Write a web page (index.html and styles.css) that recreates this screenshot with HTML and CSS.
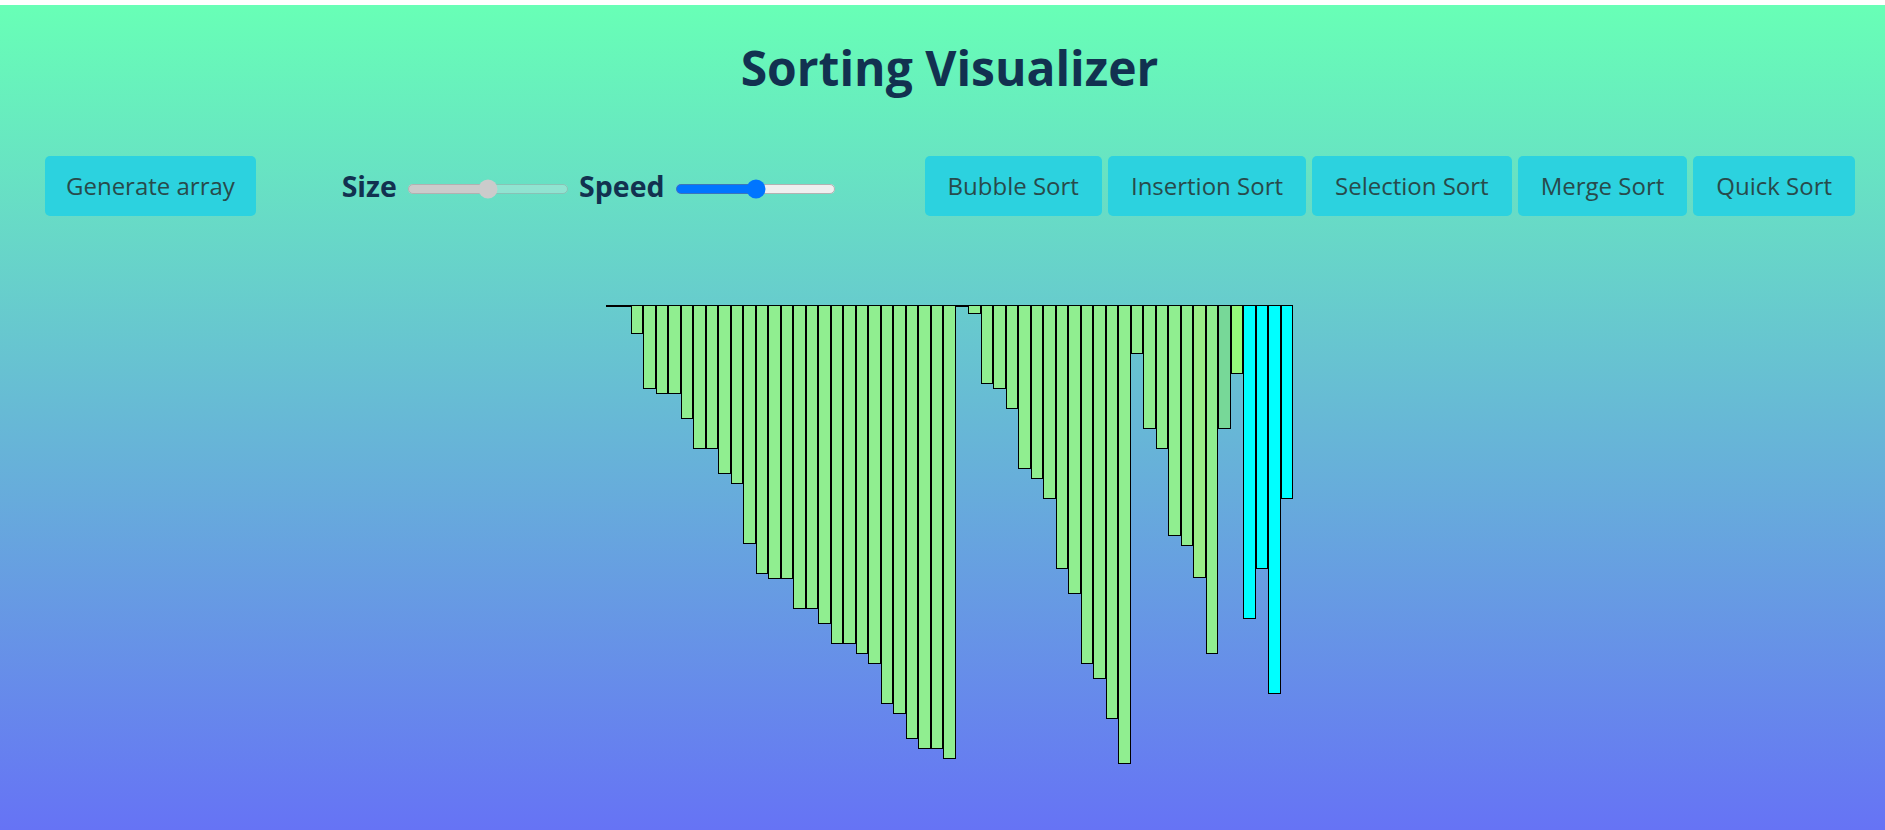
FILE: index.html
```html
<!DOCTYPE html>
<html lang="en">
<head>
<meta charset="utf-8">
<title>Sorting Visualizer</title>
<link rel="stylesheet" href="styles.css">
</head>
<body>
<div class="app">
  <h1 class="title">Sorting Visualizer</h1>
  <div class="toolbar">
    <button class="btn">Generate array</button>
    <div class="controls">
      <label class="ctl-label" for="size">Size</label>
      <input class="range" id="size" type="range" min="0" max="100" value="50" disabled>
      <label class="ctl-label" for="speed">Speed</label>
      <input class="range" id="speed" type="range" min="0" max="100" value="50">
    </div>
    <div class="sorts">
      <button class="btn">Bubble Sort</button>
      <button class="btn">Insertion Sort</button>
      <button class="btn">Selection Sort</button>
      <button class="btn">Merge Sort</button>
      <button class="btn">Quick Sort</button>
    </div>
  </div>
  <div class="chart">
    <div class="bar" style="height:2px"></div>
    <div class="bar" style="height:2px"></div>
    <div class="bar" style="height:29px"></div>
    <div class="bar" style="height:84px"></div>
    <div class="bar" style="height:89px"></div>
    <div class="bar" style="height:89px"></div>
    <div class="bar" style="height:114px"></div>
    <div class="bar" style="height:144px"></div>
    <div class="bar" style="height:144px"></div>
    <div class="bar" style="height:169px"></div>
    <div class="bar" style="height:179px"></div>
    <div class="bar" style="height:239px"></div>
    <div class="bar" style="height:269px"></div>
    <div class="bar" style="height:274px"></div>
    <div class="bar" style="height:274px"></div>
    <div class="bar" style="height:304px"></div>
    <div class="bar" style="height:304px"></div>
    <div class="bar" style="height:319px"></div>
    <div class="bar" style="height:339px"></div>
    <div class="bar" style="height:339px"></div>
    <div class="bar" style="height:349px"></div>
    <div class="bar" style="height:359px"></div>
    <div class="bar" style="height:399px"></div>
    <div class="bar" style="height:409px"></div>
    <div class="bar" style="height:434px"></div>
    <div class="bar" style="height:444px"></div>
    <div class="bar" style="height:444px"></div>
    <div class="bar" style="height:454px"></div>
    <div class="bar" style="height:2px"></div>
    <div class="bar" style="height:9px"></div>
    <div class="bar" style="height:79px"></div>
    <div class="bar" style="height:84px"></div>
    <div class="bar" style="height:104px"></div>
    <div class="bar" style="height:164px"></div>
    <div class="bar" style="height:174px"></div>
    <div class="bar" style="height:194px"></div>
    <div class="bar" style="height:264px"></div>
    <div class="bar" style="height:289px"></div>
    <div class="bar" style="height:359px"></div>
    <div class="bar" style="height:374px"></div>
    <div class="bar" style="height:414px"></div>
    <div class="bar" style="height:459px"></div>
    <div class="bar" style="height:49px"></div>
    <div class="bar" style="height:124px"></div>
    <div class="bar" style="height:144px"></div>
    <div class="bar" style="height:231px"></div>
    <div class="bar" style="height:241px"></div>
    <div class="bar bar-warm" style="height:273px"></div>
    <div class="bar" style="height:349px"></div>
    <div class="bar bar-cool" style="height:124px"></div>
    <div class="bar bar-bright" style="height:69px"></div>
    <div class="bar bar-active" style="height:314px"></div>
    <div class="bar bar-active" style="height:264px"></div>
    <div class="bar bar-active" style="height:389px"></div>
    <div class="bar bar-active" style="height:194px"></div>
  </div>
</div>
</body>
</html>
```
FILE: styles.css
```css
html, body {
  margin: 0;
  padding: 0;
  background: #ffffff;
}

body {
  font-family: "Open Sans", "Noto Sans", sans-serif;
  overflow: hidden;
}

.app {
  margin-top: 5px;
  height: 825px;
  background: linear-gradient(180deg, #68ffb6 0%, #6673f5 100%);
  overflow: hidden;
}

.title {
  margin: 0;
  padding: 34px 0 0 14px;
  text-align: center;
  font-size: 48px;
  line-height: 58px;
  font-weight: 700;
  color: #123150;
}

.toolbar {
  display: flex;
  justify-content: space-between;
  align-items: center;
  padding: 0 30px 0 45px;
  margin-top: 59px;
}

.btn {
  height: 60px;
  padding: 0 21px;
  border: none;
  border-radius: 5px;
  background: #2cd2df;
  color: #284a4b;
  font-family: "Open Sans", "Noto Sans", sans-serif;
  font-size: 24px;
  line-height: 60px;
  white-space: nowrap;
  cursor: pointer;
}

.sorts .btn {
  padding: 0 23px;
}

.controls {
  display: flex;
  align-items: center;
  gap: 8px;
}

.ctl-label {
  font-size: 28.5px;
  line-height: 34px;
  font-weight: 700;
  color: #123150;
}

.range {
  zoom: 1.25;
  margin: 4px 2px 0;
}

.sorts {
  display: flex;
  gap: 6px;
}

.chart {
  display: flex;
  justify-content: center;
  align-items: flex-start;
  padding-left: 14px;
  margin-top: 89px;
}

.bar {
  width: 12.5px;
  box-sizing: border-box;
  border: 1px solid #000000;
  background: #90ee90;
}

.bar-warm { background: #9aee88; }
.bar-cool { background: #77d898; }
.bar-bright { background: #95f87a; }
.bar-active { background: #00ffff; }
```
